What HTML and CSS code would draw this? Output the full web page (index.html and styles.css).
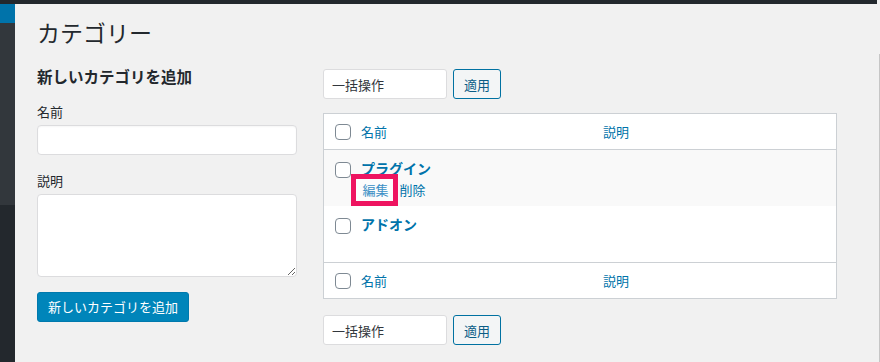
FILE: index.html
```html
<!DOCTYPE html>
<html lang="ja">
<head>
<meta charset="utf-8">
<title>カテゴリー</title>
<link rel="stylesheet" href="styles.css">
</head>
<body>
<div class="topbar"></div>
<div class="layout">
  <aside class="sidebar">
    <div class="menu-current"></div>
    <div class="menu-rest"></div>
  </aside>
  <main class="main">
    <h1 class="title">カテゴリー</h1>
    <div class="cols">
      <section class="col-left">
        <h2 class="form-title">新しいカテゴリを追加</h2>
        <div class="field">
          <label class="label">名前</label>
          <input class="text-input" type="text">
        </div>
        <div class="field">
          <label class="label">説明</label>
          <textarea class="textarea"></textarea>
        </div>
        <button class="btn-primary">新しいカテゴリを追加</button>
      </section>
      <section class="col-right">
        <div class="bulk">
          <select class="bulk-select"><option>一括操作</option></select>
          <button class="btn-secondary">適用</button>
        </div>
        <div class="table">
          <div class="row head">
            <div class="cell-check"><input class="check" type="checkbox"></div>
            <div class="cell-text"><a class="col-link">名前</a></div>
            <div class="cell-text"><a class="col-link">説明</a></div>
          </div>
          <div class="row item alt">
            <div class="cell-check item-check"><input class="check" type="checkbox"></div>
            <div class="cell-name">
              <a class="name-link">プラグイン</a>
              <div class="row-actions">
                <a class="action-edit">編集</a>
                <a class="action-delete">削除</a>
              </div>
            </div>
            <div class="cell-name"></div>
          </div>
          <div class="row item">
            <div class="cell-check item-check"><input class="check" type="checkbox"></div>
            <div class="cell-name"><a class="name-link">アドオン</a></div>
            <div class="cell-name"></div>
          </div>
          <div class="row foot">
            <div class="cell-check"><input class="check" type="checkbox"></div>
            <div class="cell-text"><a class="col-link">名前</a></div>
            <div class="cell-text"><a class="col-link">説明</a></div>
          </div>
        </div>
        <div class="bulk bulk-bottom">
          <select class="bulk-select"><option>一括操作</option></select>
          <button class="btn-secondary">適用</button>
        </div>
      </section>
    </div>
  </main>
</div>
</body>
</html>
```

FILE: styles.css
```css
* { box-sizing: border-box; }

html, body {
  margin: 0;
  padding: 0;
}

body {
  background: #f1f1f1;
  font-family: "Noto Sans CJK JP", "Noto Sans", sans-serif;
  color: #23282d;
  font-size: 13px;
  overflow: hidden;
}

body::after {
  content: "";
  position: fixed;
  right: 0;
  top: 54px;
  bottom: 0;
  width: 1px;
  background: #c6c6c6;
}

.topbar {
  height: 4px;
  margin-right: 3px;
  background: #23282d;
}

.layout {
  display: flex;
  min-height: 358px;
}

.sidebar {
  width: 15px;
  flex: none;
  background: #23282d;
}

.menu-current {
  height: 19px;
  background: #0073aa;
}

.menu-rest {
  height: 182px;
  background: #32373c;
}

.main {
  flex: 1;
  padding: 13px 0 0 22px;
}

.title {
  margin: 0;
  font-size: 23px;
  font-weight: 400;
  line-height: 30px;
  color: #23282d;
}

.cols {
  display: flex;
  gap: 26px;
  margin-top: 19px;
}

.col-left {
  width: 260px;
  display: flex;
  flex-direction: column;
}

.form-title {
  margin: 0;
  font-size: 15.5px;
  line-height: 20px;
  font-weight: 700;
  color: #23282d;
}

.field {
  margin-top: 17px;
  display: flex;
  flex-direction: column;
}

.label {
  font-size: 13px;
  line-height: 18px;
  color: #23282d;
}

.text-input {
  margin-top: 4px;
  height: 30px;
  width: 260px;
  border: 1px solid #dcdcde;
  border-radius: 4px;
  background: #fff;
  box-shadow: inset 0 1px 2px rgba(0,0,0,.04);
}

.textarea {
  margin-top: 4px;
  height: 83px;
  width: 260px;
  border: 1px solid #dcdcde;
  border-radius: 4px;
  background: #fff;
  resize: vertical;
  font-family: inherit;
}

.btn-primary {
  margin-top: 15px;
  align-self: flex-start;
  height: 30px;
  padding: 0 10px;
  background: #0085ba;
  border: 1px solid #0079ad;
  border-radius: 3px;
  color: #fff;
  font-family: inherit;
  font-size: 13px;
  line-height: 28px;
}

.col-right {
  width: 514px;
  padding-top: 3px;
}

.bulk {
  display: flex;
  gap: 6px;
}

.bulk-bottom {
  margin-top: 16px;
}

.bulk-select {
  -webkit-appearance: none;
  appearance: none;
  width: 124px;
  height: 30px;
  padding: 0 8px;
  border: 1px solid #dcdcde;
  border-radius: 3px;
  background: #fff;
  color: #32373c;
  font-family: inherit;
  font-size: 13px;
}

.btn-secondary {
  width: 48px;
  height: 30px;
  padding: 0;
  border: 1px solid #0071a1;
  border-radius: 3px;
  background: #f3f5f6;
  color: #0b5d86;
  font-family: inherit;
  font-size: 13px;
}

.table {
  margin-top: 14px;
  border: 1px solid #ccd0d4;
  background: #fff;
}

.row {
  display: grid;
  grid-template-columns: 29px 242px 1fr;
}

.head {
  height: 36px;
  border-bottom: 1px solid #ccd0d4;
}

.foot {
  height: 36px;
  border-top: 1px solid #ccd0d4;
}

.item {
  height: 56px;
}

.alt {
  background: #f9f9f9;
}

.cell-check {
  padding: 10px 0 0 11px;
}

.item-check {
  padding-top: 12px;
}

.check {
  -webkit-appearance: none;
  appearance: none;
  display: block;
  margin: 0;
  width: 16px;
  height: 16px;
  border: 1px solid #7e8993;
  border-radius: 4px;
  background: #fff;
}

.cell-text {
  padding: 9px 8px 0;
  line-height: 18px;
  font-size: 13px;
}

.col-link {
  color: #0073aa;
}

.cell-name {
  padding: 8px 8px 0;
}

.name-link {
  display: block;
  font-size: 14px;
  line-height: 20px;
  font-weight: 700;
  color: #0073aa;
}

.row-actions {
  display: flex;
  align-items: center;
  margin-top: -4px;
  font-size: 13px;
  line-height: 22px;
}

.action-edit {
  margin-left: -10.5px;
  padding: 0 4px 0 7px;
  border: 5px solid #ee1460;
  background: #fcfcfc;
  color: #3a8fc5;
}

.action-delete {
  margin-left: 2px;
  color: #0073aa;
}
```
